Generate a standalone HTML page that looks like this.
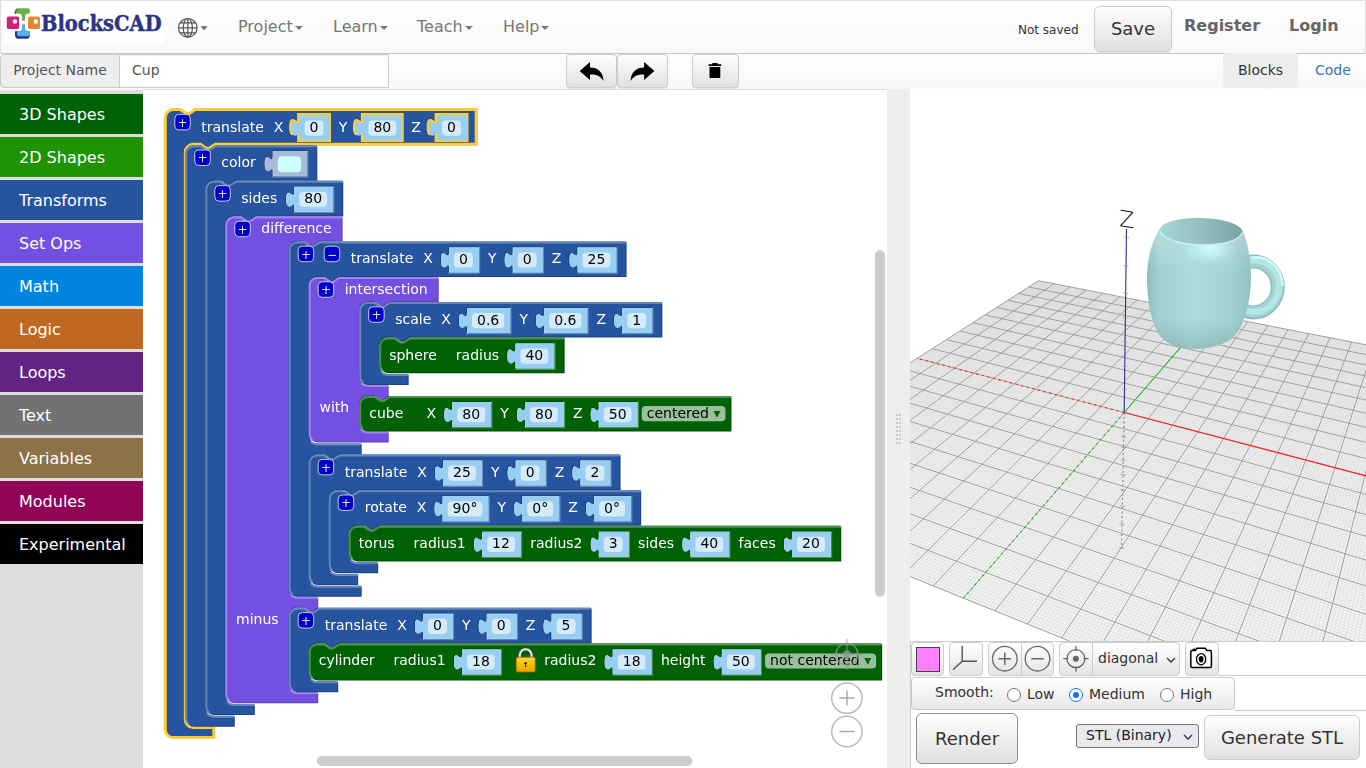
<!DOCTYPE html>
<html><head><meta charset="utf-8"><title>BlocksCAD</title>
<style>
html,body{margin:0;padding:0;}
body{width:1366px;height:768px;overflow:hidden;position:relative;background:#fff;font-family:"DejaVu Sans","Liberation Sans",sans-serif;font-size:14px;color:#333;}
*{box-sizing:border-box;}
#nav{position:absolute;left:0;top:0;width:1366px;height:54px;background:linear-gradient(#fff,#f8f8f8);border:1px solid #e0e0e0;border-bottom:1px solid #c8c8c8;box-shadow:0 1px 2px rgba(0,0,0,.22);}
#logo{position:absolute;left:4px;top:3px;width:158px;height:40px;background:#fff;}
.mi{position:absolute;top:16px;font-size:16px;color:#777;line-height:20px;white-space:nowrap;}
.caret{display:inline-block;width:0;height:0;border-top:4px solid #777;border-left:4px solid transparent;border-right:4px solid transparent;vertical-align:middle;margin-left:2px;}
#notsaved{position:absolute;left:1017px;top:21px;font-size:12px;color:#333;line-height:16px;}
#save{position:absolute;left:1093px;top:5px;width:78px;height:46px;border:1px solid #ccc;border-radius:6px;background:linear-gradient(#fff,#e0e0e0);font-size:18px;color:#333;text-align:center;line-height:44px;box-shadow:inset 0 1px 0 rgba(255,255,255,.15),0 1px 1px rgba(0,0,0,.075);}
.bl{position:absolute;top:15px;font-size:16px;font-weight:bold;color:#666;line-height:20px;}
#bar{position:absolute;left:0;top:54px;width:1366px;height:35px;background:linear-gradient(#fefefe,#f8f8f8);}
#pn{position:absolute;left:0;top:0px;width:120px;height:34px;border:1px solid #ccc;border-radius:4px 0 0 4px;background:#eee;color:#555;font-size:14px;line-height:30px;text-align:center;}
#pi{position:absolute;left:119px;top:0px;width:270px;height:34px;border:1px solid #ccc;background:#fff;color:#555;font-size:14px;line-height:30px;padding-left:12px;box-shadow:inset 0 1px 1px rgba(0,0,0,.075);}
.tb{position:absolute;top:0px;height:34px;border:1px solid #ccc;border-radius:4px;background:linear-gradient(#fff,#e0e0e0);box-shadow:0 1px 1px rgba(0,0,0,.075);}
#tabBlocks{position:absolute;left:1223px;top:-1px;width:75px;height:35px;background:#eee;border-radius:4px;color:#333;font-size:14px;line-height:34px;text-align:center;}
#tabCode{position:absolute;left:1315px;top:-1px;color:#337ab7;font-size:14px;line-height:34px;}
#toolbox{position:absolute;left:0;top:90px;width:143px;height:678px;background:#ddd;}
.cat{position:absolute;left:0;width:143px;height:40px;color:#fff;font-size:16px;line-height:42px;padding-left:19px;white-space:nowrap;}
#ws{position:absolute;left:143px;top:89px;width:744px;height:679px;background:#fff;overflow:hidden;box-shadow:inset 0 1px 0 #ddd;}
#resizer{position:absolute;left:887px;top:89px;width:23px;height:679px;background:#eee;}
#view{position:absolute;left:910px;top:89px;width:456px;height:552px;background:#fff;overflow:hidden;}
.bt{fill:#fff;font-size:14px;font-family:"DejaVu Sans",sans-serif;}
.et{fill:#000;font-size:14px;font-family:"DejaVu Sans",sans-serif;}
.er{fill:#fff;fill-opacity:.6;}
.is{fill:#00c;stroke:#ccc;stroke-width:1px;}
.im{fill:#e4e4e4;font-family:"DejaVu Sans",sans-serif;font-size:12px;text-anchor:middle;}

#resizer i{position:absolute;width:2px;height:2px;background:#c8c8c8;}
#vtools{position:absolute;left:910px;top:641px;width:456px;height:35px;background:#fff;border-top:1px solid #ccc;border-left:1px solid #ccc;}
.vb{position:absolute;top:0px;height:34px;border:1px solid #ccc;border-radius:4px;background:linear-gradient(#fff,#e4e4e4);overflow:hidden;}
#swatch{position:absolute;left:4px;top:4px;width:24px;height:25px;background:#ff80ff;border:1px solid #444;}
#smooth{position:absolute;left:911px;top:677px;width:324px;height:33px;border:1px solid #ccc;border-radius:4px;background:linear-gradient(#fff,#e8e8e8);font-size:14px;color:#333;}
.rd{position:absolute;top:10px;width:14px;height:14px;border:1.8px solid #767680;border-radius:50%;background:#fff;}
.rd.on{border-color:#1a6fe8;}
.rd.on:after{content:"";position:absolute;left:2.5px;top:2.5px;width:6px;height:6px;border-radius:50%;background:#1a6fe8;}
#hl1{position:absolute;left:1218px;top:675px;width:148px;height:1px;background:#ccc;}
#hl2{position:absolute;left:1234px;top:710px;width:132px;height:1px;background:#ccc;}
#vl1{position:absolute;left:910px;top:676px;width:1px;height:92px;background:#ccc;}
#render{position:absolute;left:916px;top:713px;width:102px;height:51px;border:1px solid #8c8c8c;border-radius:6px;background:linear-gradient(#fff,#e0e0e0);font-size:18px;color:#333;text-align:center;line-height:50px;}
#stl{position:absolute;left:1076px;top:724px;width:123px;height:24px;border:1px solid #767676;border-radius:3px;background:#e9e9ed;font-size:14px;color:#222;line-height:21px;padding-left:9px;}
#gen{position:absolute;left:1204px;top:715px;width:156px;height:45px;border:1px solid #ccc;border-radius:6px;background:linear-gradient(#fff,#e0e0e0);font-size:18px;color:#333;text-align:center;line-height:43px;}

</style></head>
<body>
<div id="nav">
<div id="logo"><svg width="158" height="40" viewBox="5 4 158 40">
<path d="M15.2 13.5 L15.2 11 Q15.2 8.3 18 8.3 L28 8.3 Q29.8 8.3 29.8 10.2 L29.8 12.5 Q29.8 13.8 28.3 13.8 L26.5 13.8 Q25 14.5 25 16.5 L25 20.8 L21.9 20.8 L21.9 16.5 Q21.9 14.3 20.3 13.8 Z" fill="#6ab04c"/>
<path d="M14.4 13.8 Q14.6 9.8 18 8.6 Q16 10 16 13.8 Z" fill="#2f6b2a"/>
<path d="M15 31.3 L30 31.3 L30 35 Q30 38.7 26.5 38.7 L18.5 38.7 Q15 38.7 15 35 Z" fill="#27378a"/>
<path d="M21.9 24.2 L25 24.2 L25 28 Q25 30.2 26.8 31 L28.6 31 Q30 31 30 32.4 L30 34 Q30 36.3 27.8 36.3 L19.5 36.3 Q17 36.3 17 33.8 L17 32.6 Q17 31.2 18.5 31 L20.3 31 Q21.9 30.3 21.9 28 Z" fill="#5baeeb"/>
<rect x="6.8" y="16.6" width="12.4" height="12.4" rx="1.8" fill="#d0207a"/>
<circle cx="15" cy="21.5" r="2.2" fill="#fff"/>
<rect x="28" y="16.6" width="12" height="12.4" rx="1.8" fill="#e08a2e"/>
<circle cx="35.8" cy="21.5" r="2.2" fill="#fff"/>
<text x="41" y="30.9" font-family="'DejaVu Serif Condensed','DejaVu Serif',serif" font-weight="bold" font-size="23.2" fill="#2a3585" stroke="#2a3585" stroke-width="0.45" textLength="120.5" lengthAdjust="spacingAndGlyphs">BlocksCAD</text>
</svg></div>
<svg id="globe" width="32" height="24" viewBox="176 16 32 24" style="position:absolute;left:175px;top:15px">
<g fill="none" stroke="#555" stroke-width="1.2"><circle cx="187.8" cy="27.8" r="9.3"/><ellipse cx="187.8" cy="27.8" rx="4.6" ry="9.3"/><path d="M187.8 18.5V37.1M178.5 27.8H197.1M180 22.8H195.6M180 32.8H195.6"/></g>
<path d="M200.6 26.2h7l-3.5 4z" fill="#666"/></svg>
<div class="mi" style="left:237px">Project<span class="caret"></span></div>
<div class="mi" style="left:332px">Learn<span class="caret"></span></div>
<div class="mi" style="left:416px">Teach<span class="caret"></span></div>
<div class="mi" style="left:502px">Help<span class="caret"></span></div>
<div id="notsaved">Not saved</div>
<div id="save">Save</div>
<div class="bl" style="left:1183px">Register</div>
<div class="bl" style="left:1288px">Login</div>
</div>
<div id="bar">
<div id="pn">Project Name</div><div id="pi">Cup</div>
<div class="tb" style="left:566px;width:51px"><svg width="49" height="32" viewBox="567 55 49 32"><path d="M579.7 71 L590 62 L590 67.5 C598 67.5 603 72 603.6 81 C600 75.5 596 74.3 590 74.5 L590 80 Z" fill="#000"/></svg></div>
<div class="tb" style="left:617px;width:51px"><svg width="49" height="32" viewBox="618 55 49 32"><path d="M654.4 71 L644.1 62 L644.1 67.5 C636.1 67.5 631.1 72 630.5 81 C634.1 75.5 638.1 74.3 644.1 74.5 L644.1 80 Z" fill="#000"/></svg></div>
<div class="tb" style="left:692px;width:47px"><svg width="45" height="32" viewBox="693 55 45 32"><path d="M708.6 64.3h12.6v1.8h-12.6zM712.3 62.9h5.2v1.6h-5.2zM709.5 66.9h10.8v10.2q0 1-1 1h-8.8q-1 0-1-1z" fill="#000"/></svg></div>
<div id="tabBlocks">Blocks</div><div id="tabCode">Code</div>
</div>
<div id="toolbox">
<div class="cat" style="top:4px;background:#006205">3D Shapes</div>
<div class="cat" style="top:47px;background:#209303">2D Shapes</div>
<div class="cat" style="top:90px;background:#26549E">Transforms</div>
<div class="cat" style="top:133px;background:#7450E2">Set Ops</div>
<div class="cat" style="top:176px;background:#0185E1">Math</div>
<div class="cat" style="top:219px;background:#BF6920">Logic</div>
<div class="cat" style="top:262px;background:#612485">Loops</div>
<div class="cat" style="top:305px;background:#727272">Text</div>
<div class="cat" style="top:348px;background:#8C7149">Variables</div>
<div class="cat" style="top:391px;background:#900355">Modules</div>
<div class="cat" style="top:434px;background:#000000">Experimental</div>
</div>
<div id="ws"><svg width="744" height="679" style="position:absolute;left:0;top:0;will-change:transform">
<defs><linearGradient id="lockg" x1="0" y1="0" x2="0" y2="1"><stop offset="0" stop-color="#ffd83a"/><stop offset="0.5" stop-color="#f8c000"/><stop offset="1" stop-color="#e7a400"/></linearGradient></defs>
<g transform="translate(22.3,20.6)">
<path d="m 0,8 A 8,8 0 0,1 8,0 H 15 l 6,4 3,0 6,-4 H 48.5 H 310.88 v 34.6 H 50 l -6,4 -3,0 -6,-4 h -7 a 8,8 0 0,0 -8,8 v 567.4 a 8,8 0 0,0 8,8 H 48.5 v 10 H 8 a 8,8 0 0,1 -8,-8 z M 164.23,5 h -30.92 v 5 c 0,10 -8,-8 -8,7.5 s 8,-2.5 8,7.5 v 6 h 30.92 z M 236.92,5 h -39.83 v 5 c 0,10 -8,-8 -8,7.5 s 8,-2.5 8,7.5 v 6 h 39.83 z M 301.73,5 h -30.92 v 5 c 0,10 -8,-8 -8,7.5 s 8,-2.5 8,7.5 v 6 h 30.92 z" fill="#1e437e" transform="translate(1,1)"/>
<path d="m 0,8 A 8,8 0 0,1 8,0 H 15 l 6,4 3,0 6,-4 H 48.5 H 310.88 v 34.6 H 50 l -6,4 -3,0 -6,-4 h -7 a 8,8 0 0,0 -8,8 v 567.4 a 8,8 0 0,0 8,8 H 48.5 v 10 H 8 a 8,8 0 0,1 -8,-8 z M 164.23,5 h -30.92 v 5 c 0,10 -8,-8 -8,7.5 s 8,-2.5 8,7.5 v 6 h 30.92 z M 236.92,5 h -39.83 v 5 c 0,10 -8,-8 -8,7.5 s 8,-2.5 8,7.5 v 6 h 39.83 z M 301.73,5 h -30.92 v 5 c 0,10 -8,-8 -8,7.5 s 8,-2.5 8,7.5 v 6 h 30.92 z" fill="#26549E" stroke="#fc3" stroke-width="3"/>
<g transform="translate(10,5)"><rect class="is" x="-0.5" y="-0.2" width="15.5" height="15.5" rx="4" ry="4"/><text class="im" x="7.3" y="12.2">+</text></g>
<text class="bt" x="36" y="22">translate</text>
<text class="bt" x="108.56" y="22">X</text>
<text class="bt" x="173.38" y="22">Y</text>
<text class="bt" x="246.07" y="22">Z</text>
<g transform="translate(134.31,6)">
<path d="m 0,0 H 20 H 28.92 v 24 H 0 V 20 c 0,-10 -8,8 -8,-7.5 s 8,2.5 8,-7.5 z " fill="#99cef3" transform="translate(1,1)"/>
<path d="m 0,0 H 20 H 28.92 v 24 H 0 V 20 c 0,-10 -8,8 -8,-7.5 s 8,2.5 8,-7.5 z " fill="#99cef3"/>
<g transform="translate(10,17)"><rect class="er" x="-5" y="-12" width="18.92" height="15.2" rx="4" ry="4"/><text class="et" y="-0.4">0</text></g>
</g>
<g transform="translate(198.09,6)">
<path d="m 0,0 H 20 H 37.83 v 24 H 0 V 20 c 0,-10 -8,8 -8,-7.5 s 8,2.5 8,-7.5 z " fill="#99cef3" transform="translate(1,1)"/>
<path d="m 0,0 H 20 H 37.83 v 24 H 0 V 20 c 0,-10 -8,8 -8,-7.5 s 8,2.5 8,-7.5 z " fill="#99cef3"/>
<g transform="translate(10,17)"><rect class="er" x="-5" y="-12" width="27.83" height="15.2" rx="4" ry="4"/><text class="et" y="-0.4">80</text></g>
</g>
<g transform="translate(271.81,6)">
<path d="m 0,0 H 20 H 28.92 v 24 H 0 V 20 c 0,-10 -8,8 -8,-7.5 s 8,2.5 8,-7.5 z " fill="#99cef3" transform="translate(1,1)"/>
<path d="m 0,0 H 20 H 28.92 v 24 H 0 V 20 c 0,-10 -8,8 -8,-7.5 s 8,2.5 8,-7.5 z " fill="#99cef3"/>
<g transform="translate(10,17)"><rect class="er" x="-5" y="-12" width="18.92" height="15.2" rx="4" ry="4"/><text class="et" y="-0.4">0</text></g>
</g>
<g transform="translate(20,35.6)">
<path d="m 0,8 A 8,8 0 0,1 8,0 H 15 l 6,4 3,0 6,-4 H 48.5 H 130.99 v 34.6 H 50 l -6,4 -3,0 -6,-4 h -7 a 8,8 0 0,0 -8,8 v 520 a 8,8 0 0,0 8,8 H 48.5 v 10 H 8 a 8,8 0 0,1 -8,-8 z M 121.84,5 h -35.36 v 5 c 0,10 -8,-8 -8,7.5 s 8,-2.5 8,7.5 v 6 h 35.36 z" fill="#1e437e" transform="translate(1,1)"/>
<path d="m 0,8 A 8,8 0 0,1 8,0 H 15 l 6,4 3,0 6,-4 H 48.5 H 130.99 v 34.6 H 50 l -6,4 -3,0 -6,-4 h -7 a 8,8 0 0,0 -8,8 v 520 a 8,8 0 0,0 8,8 H 48.5 v 10 H 8 a 8,8 0 0,1 -8,-8 z M 121.84,5 h -35.36 v 5 c 0,10 -8,-8 -8,7.5 s 8,-2.5 8,7.5 v 6 h 35.36 z" fill="#26549E"/>
<path d="m 0.5,7.5 A 7.5,7.5 0 0,1 8,0.5 H 15 l 6,4 3,0 6,-4 H 48 M 48,0.5 H 130.49 M 48,35.1 M 21.99,568.61 a 8.5,8.5 0 0,0 6.01,2.49 H 48 M 2.7,577.9 A 7.5,7.5 0 0,1 0.5,572.6 V 8" fill="none" stroke="#6787bb" stroke-width="2" stroke-linecap="round" transform="translate(0.5,0.5)"/>
<path d="M 122.34,5.5 v 26 h -35.36 M 81.38,24.3 l 3.68,-2.1" fill="none" stroke="#6787bb" stroke-width="1.2" stroke-linecap="round" transform="translate(0.2,0.2)"/>
<g transform="translate(10,5)"><rect class="is" x="-0.5" y="-0.2" width="15.5" height="15.5" rx="4" ry="4"/><text class="im" x="7.3" y="12.2">+</text></g>
<text class="bt" x="36" y="22">color</text>
<g transform="translate(87.48,6)">
<path d="m 0,0 H 20 H 33.36 v 24 H 0 V 20 c 0,-10 -8,8 -8,-7.5 s 8,2.5 8,-7.5 z " fill="#a8bbd8" transform="translate(1,1)"/>
<path d="m 0,0 H 20 H 33.36 v 24 H 0 V 20 c 0,-10 -8,8 -8,-7.5 s 8,2.5 8,-7.5 z " fill="#a8bbd8"/>
<rect x="5" y="5" width="23.36" height="16" rx="4" ry="4" fill="#ccffff"/>
</g>
<g transform="translate(20,35.6)">
<path d="m 0,8 A 8,8 0 0,1 8,0 H 15 l 6,4 3,0 6,-4 H 48.5 H 136.96 v 34.6 H 50 l -6,4 -3,0 -6,-4 h -7 a 8,8 0 0,0 -8,8 v 472.6 a 8,8 0 0,0 8,8 H 48.5 v 10 H 8 a 8,8 0 0,1 -8,-8 z M 127.81,5 h -39.83 v 5 c 0,10 -8,-8 -8,7.5 s 8,-2.5 8,7.5 v 6 h 39.83 z" fill="#1e437e" transform="translate(1,1)"/>
<path d="m 0,8 A 8,8 0 0,1 8,0 H 15 l 6,4 3,0 6,-4 H 48.5 H 136.96 v 34.6 H 50 l -6,4 -3,0 -6,-4 h -7 a 8,8 0 0,0 -8,8 v 472.6 a 8,8 0 0,0 8,8 H 48.5 v 10 H 8 a 8,8 0 0,1 -8,-8 z M 127.81,5 h -39.83 v 5 c 0,10 -8,-8 -8,7.5 s 8,-2.5 8,7.5 v 6 h 39.83 z" fill="#26549E"/>
<path d="m 0.5,7.5 A 7.5,7.5 0 0,1 8,0.5 H 15 l 6,4 3,0 6,-4 H 48 M 48,0.5 H 136.46 M 48,35.1 M 21.99,521.21 a 8.5,8.5 0 0,0 6.01,2.49 H 48 M 2.7,530.5 A 7.5,7.5 0 0,1 0.5,525.2 V 8" fill="none" stroke="#6787bb" stroke-width="2" stroke-linecap="round" transform="translate(0.5,0.5)"/>
<path d="M 128.31,5.5 v 26 h -39.83 M 82.88,24.3 l 3.68,-2.1" fill="none" stroke="#6787bb" stroke-width="1.2" stroke-linecap="round" transform="translate(0.2,0.2)"/>
<g transform="translate(10,5)"><rect class="is" x="-0.5" y="-0.2" width="15.5" height="15.5" rx="4" ry="4"/><text class="im" x="7.3" y="12.2">+</text></g>
<text class="bt" x="36" y="22">sides</text>
<g transform="translate(88.98,6)">
<path d="m 0,0 H 20 H 37.83 v 24 H 0 V 20 c 0,-10 -8,8 -8,-7.5 s 8,2.5 8,-7.5 z " fill="#99cef3" transform="translate(1,1)"/>
<path d="m 0,0 H 20 H 37.83 v 24 H 0 V 20 c 0,-10 -8,8 -8,-7.5 s 8,2.5 8,-7.5 z " fill="#99cef3"/>
<g transform="translate(10,17)"><rect class="er" x="-5" y="-12" width="27.83" height="15.2" rx="4" ry="4"/><text class="et" y="-0.4">80</text></g>
</g>
<g transform="translate(20,35.6)">
<path d="m 0,8 A 8,8 0 0,1 8,0 H 15 l 6,4 3,0 6,-4 H 91.88 H 116.28 v 24 H 93.38 l -6,4 -3,0 -6,-4 h -7 a 8,8 0 0,0 -8,8 v 340.4 a 8,8 0 0,0 8,8 H 91.88 v 10 H 93.38 l -6,4 -3,0 -6,-4 h -7 a 8,8 0 0,0 -8,8 v 69.4 a 8,8 0 0,0 8,8 H 91.88 v 10 H 8 a 8,8 0 0,1 -8,-8 z " fill="#5d40b5" transform="translate(1,1)"/>
<path d="m 0,8 A 8,8 0 0,1 8,0 H 15 l 6,4 3,0 6,-4 H 91.88 H 116.28 v 24 H 93.38 l -6,4 -3,0 -6,-4 h -7 a 8,8 0 0,0 -8,8 v 340.4 a 8,8 0 0,0 8,8 H 91.88 v 10 H 93.38 l -6,4 -3,0 -6,-4 h -7 a 8,8 0 0,0 -8,8 v 69.4 a 8,8 0 0,0 8,8 H 91.88 v 10 H 8 a 8,8 0 0,1 -8,-8 z " fill="#7450E2"/>
<path d="m 0.5,7.5 A 7.5,7.5 0 0,1 8,0.5 H 15 l 6,4 3,0 6,-4 H 91.38 M 91.38,0.5 H 115.78 M 91.38,24.5 M 65.37,378.41 a 8.5,8.5 0 0,0 6.01,2.49 H 91.38 M 91.38,390.9 M 65.37,473.81 a 8.5,8.5 0 0,0 6.01,2.49 H 91.38 M 2.7,483.1 A 7.5,7.5 0 0,1 0.5,477.8 V 8" fill="none" stroke="#9e84eb" stroke-width="2" stroke-linecap="round" transform="translate(0.5,0.5)"/>
<g transform="translate(10,5)"><rect class="is" x="-0.5" y="-0.2" width="15.5" height="15.5" rx="4" ry="4"/><text class="im" x="7.3" y="12.2">+</text></g>
<text class="bt" x="36" y="17">difference</text>
<text class="bt" x="10.8" y="407.4">minus</text>
<g transform="translate(63.38,25)">
<path d="m 0,8 A 8,8 0 0,1 8,0 H 15 l 6,4 3,0 6,-4 H 72 H 336.88 v 34.6 H 50 l -6,4 -3,0 -6,-4 h -7 a 8,8 0 0,0 -8,8 v 151.6 a 8,8 0 0,0 8,8 H 72 v 10 H 50 l -6,4 -3,0 -6,-4 h -7 a 8,8 0 0,0 -8,8 v 116.2 a 8,8 0 0,0 8,8 H 72 v 10 H 8 a 8,8 0 0,1 -8,-8 z M 190.23,5 h -30.92 v 5 c 0,10 -8,-8 -8,7.5 s 8,-2.5 8,7.5 v 6 h 30.92 z M 254.01,5 h -30.92 v 5 c 0,10 -8,-8 -8,7.5 s 8,-2.5 8,7.5 v 6 h 30.92 z M 327.73,5 h -39.83 v 5 c 0,10 -8,-8 -8,7.5 s 8,-2.5 8,7.5 v 6 h 39.83 z" fill="#1e437e" transform="translate(1,1)"/>
<path d="m 0,8 A 8,8 0 0,1 8,0 H 15 l 6,4 3,0 6,-4 H 72 H 336.88 v 34.6 H 50 l -6,4 -3,0 -6,-4 h -7 a 8,8 0 0,0 -8,8 v 151.6 a 8,8 0 0,0 8,8 H 72 v 10 H 50 l -6,4 -3,0 -6,-4 h -7 a 8,8 0 0,0 -8,8 v 116.2 a 8,8 0 0,0 8,8 H 72 v 10 H 8 a 8,8 0 0,1 -8,-8 z M 190.23,5 h -30.92 v 5 c 0,10 -8,-8 -8,7.5 s 8,-2.5 8,7.5 v 6 h 30.92 z M 254.01,5 h -30.92 v 5 c 0,10 -8,-8 -8,7.5 s 8,-2.5 8,7.5 v 6 h 30.92 z M 327.73,5 h -39.83 v 5 c 0,10 -8,-8 -8,7.5 s 8,-2.5 8,7.5 v 6 h 39.83 z" fill="#26549E"/>
<path d="m 0.5,7.5 A 7.5,7.5 0 0,1 8,0.5 H 15 l 6,4 3,0 6,-4 H 71.5 M 71.5,0.5 H 336.38 M 71.5,35.1 M 21.99,200.21 a 8.5,8.5 0 0,0 6.01,2.49 H 71.5 M 71.5,212.7 M 21.99,342.41 a 8.5,8.5 0 0,0 6.01,2.49 H 71.5 M 2.7,351.7 A 7.5,7.5 0 0,1 0.5,346.4 V 8" fill="none" stroke="#6787bb" stroke-width="2" stroke-linecap="round" transform="translate(0.5,0.5)"/>
<path d="M 190.73,5.5 v 26 h -30.92 M 154.21,24.3 l 3.68,-2.1 M 254.51,5.5 v 26 h -30.92 M 217.99,24.3 l 3.68,-2.1 M 328.23,5.5 v 26 h -39.83 M 282.81,24.3 l 3.68,-2.1" fill="none" stroke="#6787bb" stroke-width="1.2" stroke-linecap="round" transform="translate(0.2,0.2)"/>
<g transform="translate(10,5)"><rect class="is" x="-0.5" y="-0.2" width="15.5" height="15.5" rx="4" ry="4"/><text class="im" x="7.3" y="12.2">+</text></g>
<g transform="translate(36,5)"><rect class="is" x="-0.5" y="-0.2" width="15.5" height="15.5" rx="4" ry="4"/><text class="im" x="7.3" y="12.2">−</text></g>
<text class="bt" x="62" y="22">translate</text>
<text class="bt" x="134.56" y="22">X</text>
<text class="bt" x="199.38" y="22">Y</text>
<text class="bt" x="263.16" y="22">Z</text>
<g transform="translate(160.31,6)">
<path d="m 0,0 H 20 H 28.92 v 24 H 0 V 20 c 0,-10 -8,8 -8,-7.5 s 8,2.5 8,-7.5 z " fill="#99cef3" transform="translate(1,1)"/>
<path d="m 0,0 H 20 H 28.92 v 24 H 0 V 20 c 0,-10 -8,8 -8,-7.5 s 8,2.5 8,-7.5 z " fill="#99cef3"/>
<g transform="translate(10,17)"><rect class="er" x="-5" y="-12" width="18.92" height="15.2" rx="4" ry="4"/><text class="et" y="-0.4">0</text></g>
</g>
<g transform="translate(224.09,6)">
<path d="m 0,0 H 20 H 28.92 v 24 H 0 V 20 c 0,-10 -8,8 -8,-7.5 s 8,2.5 8,-7.5 z " fill="#99cef3" transform="translate(1,1)"/>
<path d="m 0,0 H 20 H 28.92 v 24 H 0 V 20 c 0,-10 -8,8 -8,-7.5 s 8,2.5 8,-7.5 z " fill="#99cef3"/>
<g transform="translate(10,17)"><rect class="er" x="-5" y="-12" width="18.92" height="15.2" rx="4" ry="4"/><text class="et" y="-0.4">0</text></g>
</g>
<g transform="translate(288.91,6)">
<path d="m 0,0 H 20 H 37.83 v 24 H 0 V 20 c 0,-10 -8,8 -8,-7.5 s 8,2.5 8,-7.5 z " fill="#99cef3" transform="translate(1,1)"/>
<path d="m 0,0 H 20 H 37.83 v 24 H 0 V 20 c 0,-10 -8,8 -8,-7.5 s 8,2.5 8,-7.5 z " fill="#99cef3"/>
<g transform="translate(10,17)"><rect class="er" x="-5" y="-12" width="27.83" height="15.2" rx="4" ry="4"/><text class="et" y="-0.4">25</text></g>
</g>
<g transform="translate(20,35.6)">
<path d="m 0,8 A 8,8 0 0,1 8,0 H 15 l 6,4 3,0 6,-4 H 79 H 129.05 v 24 H 80.5 l -6,4 -3,0 -6,-4 h -7 a 8,8 0 0,0 -8,8 v 68 a 8,8 0 0,0 8,8 H 79 v 10 H 80.5 l -6,4 -3,0 -6,-4 h -7 a 8,8 0 0,0 -8,8 v 20.6 a 8,8 0 0,0 8,8 H 79 v 10 H 8 a 8,8 0 0,1 -8,-8 z " fill="#5d40b5" transform="translate(1,1)"/>
<path d="m 0,8 A 8,8 0 0,1 8,0 H 15 l 6,4 3,0 6,-4 H 79 H 129.05 v 24 H 80.5 l -6,4 -3,0 -6,-4 h -7 a 8,8 0 0,0 -8,8 v 68 a 8,8 0 0,0 8,8 H 79 v 10 H 80.5 l -6,4 -3,0 -6,-4 h -7 a 8,8 0 0,0 -8,8 v 20.6 a 8,8 0 0,0 8,8 H 79 v 10 H 8 a 8,8 0 0,1 -8,-8 z " fill="#7450E2"/>
<path d="m 0.5,7.5 A 7.5,7.5 0 0,1 8,0.5 H 15 l 6,4 3,0 6,-4 H 78.5 M 78.5,0.5 H 128.55 M 78.5,24.5 M 52.49,106.01 a 8.5,8.5 0 0,0 6.01,2.49 H 78.5 M 78.5,118.5 M 52.49,152.61 a 8.5,8.5 0 0,0 6.01,2.49 H 78.5 M 2.7,161.9 A 7.5,7.5 0 0,1 0.5,156.6 V 8" fill="none" stroke="#9e84eb" stroke-width="2" stroke-linecap="round" transform="translate(0.5,0.5)"/>
<g transform="translate(10,5)"><rect class="is" x="-0.5" y="-0.2" width="15.5" height="15.5" rx="4" ry="4"/><text class="im" x="7.3" y="12.2">+</text></g>
<text class="bt" x="36" y="17">intersection</text>
<text class="bt" x="10.8" y="135">with</text>
<g transform="translate(50.5,25)">
<path d="m 0,8 A 8,8 0 0,1 8,0 H 15 l 6,4 3,0 6,-4 H 48.5 H 302.18 v 34.6 H 50 l -6,4 -3,0 -6,-4 h -7 a 8,8 0 0,0 -8,8 v 21.4 a 8,8 0 0,0 8,8 H 48.5 v 10 H 8 a 8,8 0 0,1 -8,-8 z M 151.09,5 h -44.27 v 5 c 0,10 -8,-8 -8,7.5 s 8,-2.5 8,7.5 v 6 h 44.27 z M 228.22,5 h -44.27 v 5 c 0,10 -8,-8 -8,7.5 s 8,-2.5 8,7.5 v 6 h 44.27 z M 293.03,5 h -30.92 v 5 c 0,10 -8,-8 -8,7.5 s 8,-2.5 8,7.5 v 6 h 30.92 z" fill="#1e437e" transform="translate(1,1)"/>
<path d="m 0,8 A 8,8 0 0,1 8,0 H 15 l 6,4 3,0 6,-4 H 48.5 H 302.18 v 34.6 H 50 l -6,4 -3,0 -6,-4 h -7 a 8,8 0 0,0 -8,8 v 21.4 a 8,8 0 0,0 8,8 H 48.5 v 10 H 8 a 8,8 0 0,1 -8,-8 z M 151.09,5 h -44.27 v 5 c 0,10 -8,-8 -8,7.5 s 8,-2.5 8,7.5 v 6 h 44.27 z M 228.22,5 h -44.27 v 5 c 0,10 -8,-8 -8,7.5 s 8,-2.5 8,7.5 v 6 h 44.27 z M 293.03,5 h -30.92 v 5 c 0,10 -8,-8 -8,7.5 s 8,-2.5 8,7.5 v 6 h 30.92 z" fill="#26549E"/>
<path d="m 0.5,7.5 A 7.5,7.5 0 0,1 8,0.5 H 15 l 6,4 3,0 6,-4 H 48 M 48,0.5 H 301.68 M 48,35.1 M 21.99,70.01 a 8.5,8.5 0 0,0 6.01,2.49 H 48 M 2.7,79.3 A 7.5,7.5 0 0,1 0.5,74 V 8" fill="none" stroke="#6787bb" stroke-width="2" stroke-linecap="round" transform="translate(0.5,0.5)"/>
<path d="M 151.59,5.5 v 26 h -44.27 M 101.72,24.3 l 3.68,-2.1 M 228.72,5.5 v 26 h -44.27 M 178.85,24.3 l 3.68,-2.1 M 293.53,5.5 v 26 h -30.92 M 257.01,24.3 l 3.68,-2.1" fill="none" stroke="#6787bb" stroke-width="1.2" stroke-linecap="round" transform="translate(0.2,0.2)"/>
<g transform="translate(10,5)"><rect class="is" x="-0.5" y="-0.2" width="15.5" height="15.5" rx="4" ry="4"/><text class="im" x="7.3" y="12.2">+</text></g>
<text class="bt" x="36" y="22">scale</text>
<text class="bt" x="82.08" y="22">X</text>
<text class="bt" x="160.24" y="22">Y</text>
<text class="bt" x="237.37" y="22">Z</text>
<g transform="translate(107.82,6)">
<path d="m 0,0 H 20 H 42.27 v 24 H 0 V 20 c 0,-10 -8,8 -8,-7.5 s 8,2.5 8,-7.5 z " fill="#99cef3" transform="translate(1,1)"/>
<path d="m 0,0 H 20 H 42.27 v 24 H 0 V 20 c 0,-10 -8,8 -8,-7.5 s 8,2.5 8,-7.5 z " fill="#99cef3"/>
<g transform="translate(10,17)"><rect class="er" x="-5" y="-12" width="32.27" height="15.2" rx="4" ry="4"/><text class="et" y="-0.4">0.6</text></g>
</g>
<g transform="translate(184.95,6)">
<path d="m 0,0 H 20 H 42.27 v 24 H 0 V 20 c 0,-10 -8,8 -8,-7.5 s 8,2.5 8,-7.5 z " fill="#99cef3" transform="translate(1,1)"/>
<path d="m 0,0 H 20 H 42.27 v 24 H 0 V 20 c 0,-10 -8,8 -8,-7.5 s 8,2.5 8,-7.5 z " fill="#99cef3"/>
<g transform="translate(10,17)"><rect class="er" x="-5" y="-12" width="32.27" height="15.2" rx="4" ry="4"/><text class="et" y="-0.4">0.6</text></g>
</g>
<g transform="translate(263.11,6)">
<path d="m 0,0 H 20 H 28.92 v 24 H 0 V 20 c 0,-10 -8,8 -8,-7.5 s 8,2.5 8,-7.5 z " fill="#99cef3" transform="translate(1,1)"/>
<path d="m 0,0 H 20 H 28.92 v 24 H 0 V 20 c 0,-10 -8,8 -8,-7.5 s 8,2.5 8,-7.5 z " fill="#99cef3"/>
<g transform="translate(10,17)"><rect class="er" x="-5" y="-12" width="18.92" height="15.2" rx="4" ry="4"/><text class="et" y="-0.4">1</text></g>
</g>
<g transform="translate(20,35.6)">
<path d="m 0,8 A 8,8 0 0,1 8,0 H 15 l 6,4 3,0 6,-4 H 40 H 184.45 v 34.6 H 8 a 8,8 0 0,1 -8,-8 z M 175.1,5 h -39.83 v 5 c 0,10 -8,-8 -8,7.5 s 8,-2.5 8,7.5 v 6 h 39.83 z" fill="#004e04" transform="translate(1,1)"/>
<path d="m 0,8 A 8,8 0 0,1 8,0 H 15 l 6,4 3,0 6,-4 H 40 H 184.45 v 34.6 H 8 a 8,8 0 0,1 -8,-8 z M 175.1,5 h -39.83 v 5 c 0,10 -8,-8 -8,7.5 s 8,-2.5 8,7.5 v 6 h 39.83 z" fill="#006205"/>
<path d="m 0.5,7.5 A 7.5,7.5 0 0,1 8,0.5 H 15 l 6,4 3,0 6,-4 H 39.5 M 39.5,0.5 H 183.95 M 2.7,31.9 A 7.5,7.5 0 0,1 0.5,26.6 V 8" fill="none" stroke="#4c9150" stroke-width="2" stroke-linecap="round" transform="translate(0.5,0.5)"/>
<path d="M 175.6,5.5 v 26 h -39.83 M 130.17,24.3 l 3.68,-2.1" fill="none" stroke="#4c9150" stroke-width="1.2" stroke-linecap="round" transform="translate(0.2,0.2)"/>
<text class="bt" x="10" y="22">sphere  </text>
<text class="bt" x="76.64" y="22">radius</text>
<g transform="translate(136.27,6)">
<path d="m 0,0 H 20 H 37.83 v 24 H 0 V 20 c 0,-10 -8,8 -8,-7.5 s 8,2.5 8,-7.5 z " fill="#99cef3" transform="translate(1,1)"/>
<path d="m 0,0 H 20 H 37.83 v 24 H 0 V 20 c 0,-10 -8,8 -8,-7.5 s 8,2.5 8,-7.5 z " fill="#99cef3"/>
<g transform="translate(10,17)"><rect class="er" x="-5" y="-12" width="27.83" height="15.2" rx="4" ry="4"/><text class="et" y="-0.4">40</text></g>
</g>
</g>
</g>
<g transform="translate(50.5,119)">
<path d="m 0,8 A 8,8 0 0,1 8,0 H 15 l 6,4 3,0 6,-4 H 40 H 371.27 v 34.6 H 8 a 8,8 0 0,1 -8,-8 z M 131.99,5 h -39.83 v 5 c 0,10 -8,-8 -8,7.5 s 8,-2.5 8,7.5 v 6 h 39.83 z M 204.68,5 h -39.83 v 5 c 0,10 -8,-8 -8,7.5 s 8,-2.5 8,7.5 v 6 h 39.83 z M 278.41,5 h -39.83 v 5 c 0,10 -8,-8 -8,7.5 s 8,-2.5 8,7.5 v 6 h 39.83 z" fill="#004e04" transform="translate(1,1)"/>
<path d="m 0,8 A 8,8 0 0,1 8,0 H 15 l 6,4 3,0 6,-4 H 40 H 371.27 v 34.6 H 8 a 8,8 0 0,1 -8,-8 z M 131.99,5 h -39.83 v 5 c 0,10 -8,-8 -8,7.5 s 8,-2.5 8,7.5 v 6 h 39.83 z M 204.68,5 h -39.83 v 5 c 0,10 -8,-8 -8,7.5 s 8,-2.5 8,7.5 v 6 h 39.83 z M 278.41,5 h -39.83 v 5 c 0,10 -8,-8 -8,7.5 s 8,-2.5 8,7.5 v 6 h 39.83 z" fill="#006205"/>
<path d="m 0.5,7.5 A 7.5,7.5 0 0,1 8,0.5 H 15 l 6,4 3,0 6,-4 H 39.5 M 39.5,0.5 H 370.77 M 2.7,31.9 A 7.5,7.5 0 0,1 0.5,26.6 V 8" fill="none" stroke="#4c9150" stroke-width="2" stroke-linecap="round" transform="translate(0.5,0.5)"/>
<path d="M 132.49,5.5 v 26 h -39.83 M 87.07,24.3 l 3.68,-2.1 M 205.18,5.5 v 26 h -39.83 M 159.76,24.3 l 3.68,-2.1 M 278.91,5.5 v 26 h -39.83 M 233.48,24.3 l 3.68,-2.1" fill="none" stroke="#4c9150" stroke-width="1.2" stroke-linecap="round" transform="translate(0.2,0.2)"/>
<text class="bt" x="10" y="22">cube   </text>
<text class="bt" x="67.42" y="22">X</text>
<text class="bt" x="141.14" y="22">Y</text>
<text class="bt" x="213.83" y="22">Z</text>
<g transform="translate(287.56,22)"><rect class="er" x="-5" y="-12" width="83.72" height="15.2" rx="4" ry="4"/><text class="et" y="-0.4">centered<tspan fill="#006205"> ▾</tspan></text></g>
<g transform="translate(93.17,6)">
<path d="m 0,0 H 20 H 37.83 v 24 H 0 V 20 c 0,-10 -8,8 -8,-7.5 s 8,2.5 8,-7.5 z " fill="#99cef3" transform="translate(1,1)"/>
<path d="m 0,0 H 20 H 37.83 v 24 H 0 V 20 c 0,-10 -8,8 -8,-7.5 s 8,2.5 8,-7.5 z " fill="#99cef3"/>
<g transform="translate(10,17)"><rect class="er" x="-5" y="-12" width="27.83" height="15.2" rx="4" ry="4"/><text class="et" y="-0.4">80</text></g>
</g>
<g transform="translate(165.86,6)">
<path d="m 0,0 H 20 H 37.83 v 24 H 0 V 20 c 0,-10 -8,8 -8,-7.5 s 8,2.5 8,-7.5 z " fill="#99cef3" transform="translate(1,1)"/>
<path d="m 0,0 H 20 H 37.83 v 24 H 0 V 20 c 0,-10 -8,8 -8,-7.5 s 8,2.5 8,-7.5 z " fill="#99cef3"/>
<g transform="translate(10,17)"><rect class="er" x="-5" y="-12" width="27.83" height="15.2" rx="4" ry="4"/><text class="et" y="-0.4">80</text></g>
</g>
<g transform="translate(239.58,6)">
<path d="m 0,0 H 20 H 37.83 v 24 H 0 V 20 c 0,-10 -8,8 -8,-7.5 s 8,2.5 8,-7.5 z " fill="#99cef3" transform="translate(1,1)"/>
<path d="m 0,0 H 20 H 37.83 v 24 H 0 V 20 c 0,-10 -8,8 -8,-7.5 s 8,2.5 8,-7.5 z " fill="#99cef3"/>
<g transform="translate(10,17)"><rect class="er" x="-5" y="-12" width="27.83" height="15.2" rx="4" ry="4"/><text class="et" y="-0.4">50</text></g>
</g>
</g>
</g>
<g transform="translate(20,213.2)">
<path d="m 0,8 A 8,8 0 0,1 8,0 H 15 l 6,4 3,0 6,-4 H 48.5 H 310.88 v 34.6 H 50 l -6,4 -3,0 -6,-4 h -7 a 8,8 0 0,0 -8,8 v 68.8 a 8,8 0 0,0 8,8 H 48.5 v 10 H 8 a 8,8 0 0,1 -8,-8 z M 173.13,5 h -39.83 v 5 c 0,10 -8,-8 -8,7.5 s 8,-2.5 8,7.5 v 6 h 39.83 z M 236.92,5 h -30.92 v 5 c 0,10 -8,-8 -8,7.5 s 8,-2.5 8,7.5 v 6 h 30.92 z M 301.73,5 h -30.92 v 5 c 0,10 -8,-8 -8,7.5 s 8,-2.5 8,7.5 v 6 h 30.92 z" fill="#1e437e" transform="translate(1,1)"/>
<path d="m 0,8 A 8,8 0 0,1 8,0 H 15 l 6,4 3,0 6,-4 H 48.5 H 310.88 v 34.6 H 50 l -6,4 -3,0 -6,-4 h -7 a 8,8 0 0,0 -8,8 v 68.8 a 8,8 0 0,0 8,8 H 48.5 v 10 H 8 a 8,8 0 0,1 -8,-8 z M 173.13,5 h -39.83 v 5 c 0,10 -8,-8 -8,7.5 s 8,-2.5 8,7.5 v 6 h 39.83 z M 236.92,5 h -30.92 v 5 c 0,10 -8,-8 -8,7.5 s 8,-2.5 8,7.5 v 6 h 30.92 z M 301.73,5 h -30.92 v 5 c 0,10 -8,-8 -8,7.5 s 8,-2.5 8,7.5 v 6 h 30.92 z" fill="#26549E"/>
<path d="m 0.5,7.5 A 7.5,7.5 0 0,1 8,0.5 H 15 l 6,4 3,0 6,-4 H 48 M 48,0.5 H 310.38 M 48,35.1 M 21.99,117.41 a 8.5,8.5 0 0,0 6.01,2.49 H 48 M 2.7,126.7 A 7.5,7.5 0 0,1 0.5,121.4 V 8" fill="none" stroke="#6787bb" stroke-width="2" stroke-linecap="round" transform="translate(0.5,0.5)"/>
<path d="M 173.63,5.5 v 26 h -39.83 M 128.21,24.3 l 3.68,-2.1 M 237.42,5.5 v 26 h -30.92 M 200.9,24.3 l 3.68,-2.1 M 302.23,5.5 v 26 h -30.92 M 265.71,24.3 l 3.68,-2.1" fill="none" stroke="#6787bb" stroke-width="1.2" stroke-linecap="round" transform="translate(0.2,0.2)"/>
<g transform="translate(10,5)"><rect class="is" x="-0.5" y="-0.2" width="15.5" height="15.5" rx="4" ry="4"/><text class="im" x="7.3" y="12.2">+</text></g>
<text class="bt" x="36" y="22">translate</text>
<text class="bt" x="108.56" y="22">X</text>
<text class="bt" x="182.28" y="22">Y</text>
<text class="bt" x="246.07" y="22">Z</text>
<g transform="translate(134.31,6)">
<path d="m 0,0 H 20 H 37.83 v 24 H 0 V 20 c 0,-10 -8,8 -8,-7.5 s 8,2.5 8,-7.5 z " fill="#99cef3" transform="translate(1,1)"/>
<path d="m 0,0 H 20 H 37.83 v 24 H 0 V 20 c 0,-10 -8,8 -8,-7.5 s 8,2.5 8,-7.5 z " fill="#99cef3"/>
<g transform="translate(10,17)"><rect class="er" x="-5" y="-12" width="27.83" height="15.2" rx="4" ry="4"/><text class="et" y="-0.4">25</text></g>
</g>
<g transform="translate(207,6)">
<path d="m 0,0 H 20 H 28.92 v 24 H 0 V 20 c 0,-10 -8,8 -8,-7.5 s 8,2.5 8,-7.5 z " fill="#99cef3" transform="translate(1,1)"/>
<path d="m 0,0 H 20 H 28.92 v 24 H 0 V 20 c 0,-10 -8,8 -8,-7.5 s 8,2.5 8,-7.5 z " fill="#99cef3"/>
<g transform="translate(10,17)"><rect class="er" x="-5" y="-12" width="18.92" height="15.2" rx="4" ry="4"/><text class="et" y="-0.4">0</text></g>
</g>
<g transform="translate(271.81,6)">
<path d="m 0,0 H 20 H 28.92 v 24 H 0 V 20 c 0,-10 -8,8 -8,-7.5 s 8,2.5 8,-7.5 z " fill="#99cef3" transform="translate(1,1)"/>
<path d="m 0,0 H 20 H 28.92 v 24 H 0 V 20 c 0,-10 -8,8 -8,-7.5 s 8,2.5 8,-7.5 z " fill="#99cef3"/>
<g transform="translate(10,17)"><rect class="er" x="-5" y="-12" width="18.92" height="15.2" rx="4" ry="4"/><text class="et" y="-0.4">2</text></g>
</g>
<g transform="translate(20,35.6)">
<path d="m 0,8 A 8,8 0 0,1 8,0 H 15 l 6,4 3,0 6,-4 H 48.5 H 311.51 v 34.6 H 50 l -6,4 -3,0 -6,-4 h -7 a 8,8 0 0,0 -8,8 v 21.4 a 8,8 0 0,0 8,8 H 48.5 v 10 H 8 a 8,8 0 0,1 -8,-8 z M 159.76,5 h -46.83 v 5 c 0,10 -8,-8 -8,7.5 s 8,-2.5 8,7.5 v 6 h 46.83 z M 230.54,5 h -37.92 v 5 c 0,10 -8,-8 -8,7.5 s 8,-2.5 8,7.5 v 6 h 37.92 z M 302.36,5 h -37.92 v 5 c 0,10 -8,-8 -8,7.5 s 8,-2.5 8,7.5 v 6 h 37.92 z" fill="#1e437e" transform="translate(1,1)"/>
<path d="m 0,8 A 8,8 0 0,1 8,0 H 15 l 6,4 3,0 6,-4 H 48.5 H 311.51 v 34.6 H 50 l -6,4 -3,0 -6,-4 h -7 a 8,8 0 0,0 -8,8 v 21.4 a 8,8 0 0,0 8,8 H 48.5 v 10 H 8 a 8,8 0 0,1 -8,-8 z M 159.76,5 h -46.83 v 5 c 0,10 -8,-8 -8,7.5 s 8,-2.5 8,7.5 v 6 h 46.83 z M 230.54,5 h -37.92 v 5 c 0,10 -8,-8 -8,7.5 s 8,-2.5 8,7.5 v 6 h 37.92 z M 302.36,5 h -37.92 v 5 c 0,10 -8,-8 -8,7.5 s 8,-2.5 8,7.5 v 6 h 37.92 z" fill="#26549E"/>
<path d="m 0.5,7.5 A 7.5,7.5 0 0,1 8,0.5 H 15 l 6,4 3,0 6,-4 H 48 M 48,0.5 H 311.01 M 48,35.1 M 21.99,70.01 a 8.5,8.5 0 0,0 6.01,2.49 H 48 M 2.7,79.3 A 7.5,7.5 0 0,1 0.5,74 V 8" fill="none" stroke="#6787bb" stroke-width="2" stroke-linecap="round" transform="translate(0.5,0.5)"/>
<path d="M 160.26,5.5 v 26 h -46.83 M 107.83,24.3 l 3.68,-2.1 M 231.04,5.5 v 26 h -37.92 M 187.52,24.3 l 3.68,-2.1 M 302.86,5.5 v 26 h -37.92 M 259.34,24.3 l 3.68,-2.1" fill="none" stroke="#6787bb" stroke-width="1.2" stroke-linecap="round" transform="translate(0.2,0.2)"/>
<g transform="translate(10,5)"><rect class="is" x="-0.5" y="-0.2" width="15.5" height="15.5" rx="4" ry="4"/><text class="im" x="7.3" y="12.2">+</text></g>
<text class="bt" x="36" y="22">rotate</text>
<text class="bt" x="88.19" y="22">X</text>
<text class="bt" x="168.91" y="22">Y</text>
<text class="bt" x="239.69" y="22">Z</text>
<g transform="translate(113.93,6)">
<path d="m 0,0 H 20 H 44.83 v 24 H 0 V 20 c 0,-10 -8,8 -8,-7.5 s 8,2.5 8,-7.5 z " fill="#99cef3" transform="translate(1,1)"/>
<path d="m 0,0 H 20 H 44.83 v 24 H 0 V 20 c 0,-10 -8,8 -8,-7.5 s 8,2.5 8,-7.5 z " fill="#99cef3"/>
<g transform="translate(10,17)"><rect class="er" x="-5" y="-12" width="34.83" height="15.2" rx="4" ry="4"/><text class="et" y="-0.4">90°</text></g>
</g>
<g transform="translate(193.62,6)">
<path d="m 0,0 H 20 H 35.92 v 24 H 0 V 20 c 0,-10 -8,8 -8,-7.5 s 8,2.5 8,-7.5 z " fill="#99cef3" transform="translate(1,1)"/>
<path d="m 0,0 H 20 H 35.92 v 24 H 0 V 20 c 0,-10 -8,8 -8,-7.5 s 8,2.5 8,-7.5 z " fill="#99cef3"/>
<g transform="translate(10,17)"><rect class="er" x="-5" y="-12" width="25.92" height="15.2" rx="4" ry="4"/><text class="et" y="-0.4">0°</text></g>
</g>
<g transform="translate(265.44,6)">
<path d="m 0,0 H 20 H 35.92 v 24 H 0 V 20 c 0,-10 -8,8 -8,-7.5 s 8,2.5 8,-7.5 z " fill="#99cef3" transform="translate(1,1)"/>
<path d="m 0,0 H 20 H 35.92 v 24 H 0 V 20 c 0,-10 -8,8 -8,-7.5 s 8,2.5 8,-7.5 z " fill="#99cef3"/>
<g transform="translate(10,17)"><rect class="er" x="-5" y="-12" width="25.92" height="15.2" rx="4" ry="4"/><text class="et" y="-0.4">0°</text></g>
</g>
<g transform="translate(20,35.6)">
<path d="m 0,8 A 8,8 0 0,1 8,0 H 15 l 6,4 3,0 6,-4 H 40 H 491.58 v 34.6 H 8 a 8,8 0 0,1 -8,-8 z M 172.26,5 h -39.83 v 5 c 0,10 -8,-8 -8,7.5 s 8,-2.5 8,7.5 v 6 h 39.83 z M 280.07,5 h -30.92 v 5 c 0,10 -8,-8 -8,7.5 s 8,-2.5 8,7.5 v 6 h 30.92 z M 380.58,5 h -39.83 v 5 c 0,10 -8,-8 -8,7.5 s 8,-2.5 8,7.5 v 6 h 39.83 z M 482.23,5 h -39.83 v 5 c 0,10 -8,-8 -8,7.5 s 8,-2.5 8,7.5 v 6 h 39.83 z" fill="#004e04" transform="translate(1,1)"/>
<path d="m 0,8 A 8,8 0 0,1 8,0 H 15 l 6,4 3,0 6,-4 H 40 H 491.58 v 34.6 H 8 a 8,8 0 0,1 -8,-8 z M 172.26,5 h -39.83 v 5 c 0,10 -8,-8 -8,7.5 s 8,-2.5 8,7.5 v 6 h 39.83 z M 280.07,5 h -30.92 v 5 c 0,10 -8,-8 -8,7.5 s 8,-2.5 8,7.5 v 6 h 30.92 z M 380.58,5 h -39.83 v 5 c 0,10 -8,-8 -8,7.5 s 8,-2.5 8,7.5 v 6 h 39.83 z M 482.23,5 h -39.83 v 5 c 0,10 -8,-8 -8,7.5 s 8,-2.5 8,7.5 v 6 h 39.83 z" fill="#006205"/>
<path d="m 0.5,7.5 A 7.5,7.5 0 0,1 8,0.5 H 15 l 6,4 3,0 6,-4 H 39.5 M 39.5,0.5 H 491.08 M 2.7,31.9 A 7.5,7.5 0 0,1 0.5,26.6 V 8" fill="none" stroke="#4c9150" stroke-width="2" stroke-linecap="round" transform="translate(0.5,0.5)"/>
<path d="M 172.76,5.5 v 26 h -39.83 M 127.33,24.3 l 3.68,-2.1 M 280.57,5.5 v 26 h -30.92 M 244.04,24.3 l 3.68,-2.1 M 381.08,5.5 v 26 h -39.83 M 335.65,24.3 l 3.68,-2.1 M 482.73,5.5 v 26 h -39.83 M 437.3,24.3 l 3.68,-2.1" fill="none" stroke="#4c9150" stroke-width="1.2" stroke-linecap="round" transform="translate(0.2,0.2)"/>
<text class="bt" x="10" y="22">torus  </text>
<text class="bt" x="64.89" y="22">radius1</text>
<text class="bt" x="181.61" y="22">radius2</text>
<text class="bt" x="289.42" y="22">sides</text>
<text class="bt" x="389.93" y="22">faces</text>
<g transform="translate(133.43,6)">
<path d="m 0,0 H 20 H 37.83 v 24 H 0 V 20 c 0,-10 -8,8 -8,-7.5 s 8,2.5 8,-7.5 z " fill="#99cef3" transform="translate(1,1)"/>
<path d="m 0,0 H 20 H 37.83 v 24 H 0 V 20 c 0,-10 -8,8 -8,-7.5 s 8,2.5 8,-7.5 z " fill="#99cef3"/>
<g transform="translate(10,17)"><rect class="er" x="-5" y="-12" width="27.83" height="15.2" rx="4" ry="4"/><text class="et" y="-0.4">12</text></g>
</g>
<g transform="translate(250.14,6)">
<path d="m 0,0 H 20 H 28.92 v 24 H 0 V 20 c 0,-10 -8,8 -8,-7.5 s 8,2.5 8,-7.5 z " fill="#99cef3" transform="translate(1,1)"/>
<path d="m 0,0 H 20 H 28.92 v 24 H 0 V 20 c 0,-10 -8,8 -8,-7.5 s 8,2.5 8,-7.5 z " fill="#99cef3"/>
<g transform="translate(10,17)"><rect class="er" x="-5" y="-12" width="18.92" height="15.2" rx="4" ry="4"/><text class="et" y="-0.4">3</text></g>
</g>
<g transform="translate(341.75,6)">
<path d="m 0,0 H 20 H 37.83 v 24 H 0 V 20 c 0,-10 -8,8 -8,-7.5 s 8,2.5 8,-7.5 z " fill="#99cef3" transform="translate(1,1)"/>
<path d="m 0,0 H 20 H 37.83 v 24 H 0 V 20 c 0,-10 -8,8 -8,-7.5 s 8,2.5 8,-7.5 z " fill="#99cef3"/>
<g transform="translate(10,17)"><rect class="er" x="-5" y="-12" width="27.83" height="15.2" rx="4" ry="4"/><text class="et" y="-0.4">40</text></g>
</g>
<g transform="translate(443.4,6)">
<path d="m 0,0 H 20 H 37.83 v 24 H 0 V 20 c 0,-10 -8,8 -8,-7.5 s 8,2.5 8,-7.5 z " fill="#99cef3" transform="translate(1,1)"/>
<path d="m 0,0 H 20 H 37.83 v 24 H 0 V 20 c 0,-10 -8,8 -8,-7.5 s 8,2.5 8,-7.5 z " fill="#99cef3"/>
<g transform="translate(10,17)"><rect class="er" x="-5" y="-12" width="27.83" height="15.2" rx="4" ry="4"/><text class="et" y="-0.4">20</text></g>
</g>
</g>
</g>
</g>
</g>
<g transform="translate(63.38,391.4)">
<path d="m 0,8 A 8,8 0 0,1 8,0 H 15 l 6,4 3,0 6,-4 H 48.5 H 301.98 v 34.6 H 50 l -6,4 -3,0 -6,-4 h -7 a 8,8 0 0,0 -8,8 v 22.8 a 8,8 0 0,0 8,8 H 48.5 v 10 H 8 a 8,8 0 0,1 -8,-8 z M 164.23,5 h -30.92 v 5 c 0,10 -8,-8 -8,7.5 s 8,-2.5 8,7.5 v 6 h 30.92 z M 228.01,5 h -30.92 v 5 c 0,10 -8,-8 -8,7.5 s 8,-2.5 8,7.5 v 6 h 30.92 z M 292.83,5 h -30.92 v 5 c 0,10 -8,-8 -8,7.5 s 8,-2.5 8,7.5 v 6 h 30.92 z" fill="#1e437e" transform="translate(1,1)"/>
<path d="m 0,8 A 8,8 0 0,1 8,0 H 15 l 6,4 3,0 6,-4 H 48.5 H 301.98 v 34.6 H 50 l -6,4 -3,0 -6,-4 h -7 a 8,8 0 0,0 -8,8 v 22.8 a 8,8 0 0,0 8,8 H 48.5 v 10 H 8 a 8,8 0 0,1 -8,-8 z M 164.23,5 h -30.92 v 5 c 0,10 -8,-8 -8,7.5 s 8,-2.5 8,7.5 v 6 h 30.92 z M 228.01,5 h -30.92 v 5 c 0,10 -8,-8 -8,7.5 s 8,-2.5 8,7.5 v 6 h 30.92 z M 292.83,5 h -30.92 v 5 c 0,10 -8,-8 -8,7.5 s 8,-2.5 8,7.5 v 6 h 30.92 z" fill="#26549E"/>
<path d="m 0.5,7.5 A 7.5,7.5 0 0,1 8,0.5 H 15 l 6,4 3,0 6,-4 H 48 M 48,0.5 H 301.48 M 48,35.1 M 21.99,71.41 a 8.5,8.5 0 0,0 6.01,2.49 H 48 M 2.7,80.7 A 7.5,7.5 0 0,1 0.5,75.4 V 8" fill="none" stroke="#6787bb" stroke-width="2" stroke-linecap="round" transform="translate(0.5,0.5)"/>
<path d="M 164.73,5.5 v 26 h -30.92 M 128.21,24.3 l 3.68,-2.1 M 228.51,5.5 v 26 h -30.92 M 191.99,24.3 l 3.68,-2.1 M 293.33,5.5 v 26 h -30.92 M 256.81,24.3 l 3.68,-2.1" fill="none" stroke="#6787bb" stroke-width="1.2" stroke-linecap="round" transform="translate(0.2,0.2)"/>
<g transform="translate(10,5)"><rect class="is" x="-0.5" y="-0.2" width="15.5" height="15.5" rx="4" ry="4"/><text class="im" x="7.3" y="12.2">+</text></g>
<text class="bt" x="36" y="22">translate</text>
<text class="bt" x="108.56" y="22">X</text>
<text class="bt" x="173.38" y="22">Y</text>
<text class="bt" x="237.16" y="22">Z</text>
<g transform="translate(134.31,6)">
<path d="m 0,0 H 20 H 28.92 v 24 H 0 V 20 c 0,-10 -8,8 -8,-7.5 s 8,2.5 8,-7.5 z " fill="#99cef3" transform="translate(1,1)"/>
<path d="m 0,0 H 20 H 28.92 v 24 H 0 V 20 c 0,-10 -8,8 -8,-7.5 s 8,2.5 8,-7.5 z " fill="#99cef3"/>
<g transform="translate(10,17)"><rect class="er" x="-5" y="-12" width="18.92" height="15.2" rx="4" ry="4"/><text class="et" y="-0.4">0</text></g>
</g>
<g transform="translate(198.09,6)">
<path d="m 0,0 H 20 H 28.92 v 24 H 0 V 20 c 0,-10 -8,8 -8,-7.5 s 8,2.5 8,-7.5 z " fill="#99cef3" transform="translate(1,1)"/>
<path d="m 0,0 H 20 H 28.92 v 24 H 0 V 20 c 0,-10 -8,8 -8,-7.5 s 8,2.5 8,-7.5 z " fill="#99cef3"/>
<g transform="translate(10,17)"><rect class="er" x="-5" y="-12" width="18.92" height="15.2" rx="4" ry="4"/><text class="et" y="-0.4">0</text></g>
</g>
<g transform="translate(262.91,6)">
<path d="m 0,0 H 20 H 28.92 v 24 H 0 V 20 c 0,-10 -8,8 -8,-7.5 s 8,2.5 8,-7.5 z " fill="#99cef3" transform="translate(1,1)"/>
<path d="m 0,0 H 20 H 28.92 v 24 H 0 V 20 c 0,-10 -8,8 -8,-7.5 s 8,2.5 8,-7.5 z " fill="#99cef3"/>
<g transform="translate(10,17)"><rect class="er" x="-5" y="-12" width="18.92" height="15.2" rx="4" ry="4"/><text class="et" y="-0.4">5</text></g>
</g>
<g transform="translate(20,35.6)">
<path d="m 0,8 A 8,8 0 0,1 8,0 H 15 l 6,4 3,0 6,-4 H 40 H 572.48 v 36 H 8 a 8,8 0 0,1 -8,-8 z M 192.16,5 h -39.83 v 5 c 0,10 -8,-8 -8,7.5 s 8,-2.5 8,7.5 v 6 h 39.83 z M 342.88,5 h -39.83 v 5 c 0,10 -8,-8 -8,7.5 s 8,-2.5 8,7.5 v 6 h 39.83 z M 452.03,5 h -39.83 v 5 c 0,10 -8,-8 -8,7.5 s 8,-2.5 8,7.5 v 6 h 39.83 z" fill="#004e04" transform="translate(1,1)"/>
<path d="m 0,8 A 8,8 0 0,1 8,0 H 15 l 6,4 3,0 6,-4 H 40 H 572.48 v 36 H 8 a 8,8 0 0,1 -8,-8 z M 192.16,5 h -39.83 v 5 c 0,10 -8,-8 -8,7.5 s 8,-2.5 8,7.5 v 6 h 39.83 z M 342.88,5 h -39.83 v 5 c 0,10 -8,-8 -8,7.5 s 8,-2.5 8,7.5 v 6 h 39.83 z M 452.03,5 h -39.83 v 5 c 0,10 -8,-8 -8,7.5 s 8,-2.5 8,7.5 v 6 h 39.83 z" fill="#006205"/>
<path d="m 0.5,7.5 A 7.5,7.5 0 0,1 8,0.5 H 15 l 6,4 3,0 6,-4 H 39.5 M 39.5,0.5 H 571.98 M 2.7,33.3 A 7.5,7.5 0 0,1 0.5,28 V 8" fill="none" stroke="#4c9150" stroke-width="2" stroke-linecap="round" transform="translate(0.5,0.5)"/>
<path d="M 192.66,5.5 v 26 h -39.83 M 147.23,24.3 l 3.68,-2.1 M 343.38,5.5 v 26 h -39.83 M 297.95,24.3 l 3.68,-2.1 M 452.53,5.5 v 26 h -39.83 M 407.1,24.3 l 3.68,-2.1" fill="none" stroke="#4c9150" stroke-width="1.2" stroke-linecap="round" transform="translate(0.2,0.2)"/>
<text class="bt" x="10" y="22">cylinder  </text>
<text class="bt" x="84.8" y="22">radius1</text>
<g transform="translate(201.51,22)"><g><path d="M9.6 -7 V-10.2 a5.9 5.9 0 0 1 11.8 0 V-7" fill="none" stroke="#555" stroke-width="3.6"/><path d="M9.6 -7 V-10.2 a5.9 5.9 0 0 1 11.8 0 V-7" fill="none" stroke="#e8e8e8" stroke-width="2"/><rect x="6" y="-8.2" width="19" height="14.8" rx="1.6" fill="url(#lockg)" stroke="#9a6a00" stroke-width="0.8"/><circle cx="15.5" cy="-2.2" r="1.3" fill="#222"/><path d="M15.5 -2.2 L14.7 1.6 H16.3 Z" fill="#222"/></g></g>
<text class="bt" x="235.51" y="22">radius2</text>
<text class="bt" x="352.23" y="22">height</text>
<g transform="translate(461.38,22)"><rect class="er" x="-5" y="-12" width="111.09" height="15.2" rx="4" ry="4"/><text class="et" y="-0.4">not centered<tspan fill="#006205"> ▾</tspan></text></g>
<g transform="translate(153.33,6)">
<path d="m 0,0 H 20 H 37.83 v 24 H 0 V 20 c 0,-10 -8,8 -8,-7.5 s 8,2.5 8,-7.5 z " fill="#99cef3" transform="translate(1,1)"/>
<path d="m 0,0 H 20 H 37.83 v 24 H 0 V 20 c 0,-10 -8,8 -8,-7.5 s 8,2.5 8,-7.5 z " fill="#99cef3"/>
<g transform="translate(10,17)"><rect class="er" x="-5" y="-12" width="27.83" height="15.2" rx="4" ry="4"/><text class="et" y="-0.4">18</text></g>
</g>
<g transform="translate(304.05,6)">
<path d="m 0,0 H 20 H 37.83 v 24 H 0 V 20 c 0,-10 -8,8 -8,-7.5 s 8,2.5 8,-7.5 z " fill="#99cef3" transform="translate(1,1)"/>
<path d="m 0,0 H 20 H 37.83 v 24 H 0 V 20 c 0,-10 -8,8 -8,-7.5 s 8,2.5 8,-7.5 z " fill="#99cef3"/>
<g transform="translate(10,17)"><rect class="er" x="-5" y="-12" width="27.83" height="15.2" rx="4" ry="4"/><text class="et" y="-0.4">18</text></g>
</g>
<g transform="translate(413.2,6)">
<path d="m 0,0 H 20 H 37.83 v 24 H 0 V 20 c 0,-10 -8,8 -8,-7.5 s 8,2.5 8,-7.5 z " fill="#99cef3" transform="translate(1,1)"/>
<path d="m 0,0 H 20 H 37.83 v 24 H 0 V 20 c 0,-10 -8,8 -8,-7.5 s 8,2.5 8,-7.5 z " fill="#99cef3"/>
<g transform="translate(10,17)"><rect class="er" x="-5" y="-12" width="27.83" height="15.2" rx="4" ry="4"/><text class="et" y="-0.4">50</text></g>
</g>
</g>
</g>
</g>
</g>
</g>
</g>
<g id="zoomctl" fill="none" stroke="#999" stroke-opacity="0.7" stroke-width="1.5">
<circle cx="703.9" cy="565.3" r="11"/><path d="M703.9 549.5V581M688 565.3H719.8" stroke-width="1.2"/><circle cx="703.9" cy="565.3" r="4" fill="#999" fill-opacity="0.7" stroke="none"/>
<circle cx="703.9" cy="609.1" r="15.2" stroke="#bbb" stroke-opacity="1"/><path d="M696.4 609.1H711.4M703.9 601.6V616.6" stroke="#aaa" stroke-opacity="1"/>
<circle cx="703.9" cy="642.5" r="15.2" stroke="#bbb" stroke-opacity="1"/><path d="M696.4 642.5H711.4" stroke="#aaa" stroke-opacity="1"/>
</g>
<rect x="732" y="161.2" width="10" height="346.4" rx="5" ry="5" fill="#ccc"/>
<rect x="173.9" y="667" width="375.4" height="10" rx="5" ry="5" fill="#ccc"/>
</svg></div>
<div id="resizer"><i style="left:9px;top:325px"></i><i style="left:12px;top:325px"></i><i style="left:9px;top:329px"></i><i style="left:12px;top:329px"></i><i style="left:9px;top:333px"></i><i style="left:12px;top:333px"></i><i style="left:9px;top:337px"></i><i style="left:12px;top:337px"></i><i style="left:9px;top:341px"></i><i style="left:12px;top:341px"></i><i style="left:9px;top:345px"></i><i style="left:12px;top:345px"></i><i style="left:9px;top:349px"></i><i style="left:12px;top:349px"></i><i style="left:9px;top:353px"></i><i style="left:12px;top:353px"></i></div>
<div id="view"><svg width="456" height="552" viewBox="910 89 456 552" style="position:absolute;left:0;top:0">
<defs>
<linearGradient id="gb" x1="0" y1="0" x2="1" y2="0"><stop offset="0" stop-color="#8ebcbc"/><stop offset="0.1" stop-color="#a0cfcf"/><stop offset="0.45" stop-color="#abdcdc"/><stop offset="0.8" stop-color="#a2d2d2"/><stop offset="1" stop-color="#93c0c0"/></linearGradient>
<linearGradient id="gv" x1="0" y1="0" x2="0" y2="1"><stop offset="0" stop-color="#fff" stop-opacity="0.25"/><stop offset="0.35" stop-color="#fff" stop-opacity="0"/><stop offset="0.75" stop-color="#000" stop-opacity="0"/><stop offset="1" stop-color="#000" stop-opacity="0.12"/></linearGradient>
<linearGradient id="gi" x1="0" y1="0" x2="1" y2="0"><stop offset="0" stop-color="#a6d3d3"/><stop offset="0.45" stop-color="#96c2c2"/><stop offset="1" stop-color="#7da3a3"/></linearGradient>
<radialGradient id="gh" cx="0.55" cy="0.3" r="0.45"><stop offset="0" stop-color="#d2ffff" stop-opacity="0.9"/><stop offset="1" stop-color="#c8f8f8" stop-opacity="0"/></radialGradient>
<linearGradient id="gr" x1="0" y1="0" x2="1" y2="1"><stop offset="0" stop-color="#b8eaea"/><stop offset="0.5" stop-color="#a4d4d4"/><stop offset="1" stop-color="#86b2b2"/></linearGradient>
</defs>
<path d="M1038.5 280.7 L1419.7 355.3 L1345.8 753.1 L705.7 493.6 Z" fill="#f3f3f3"/>
<path d="M708.6 491.8L1346.6 749.0M707.9 494.5L1040.1 281.0M711.5 489.9L1347.3 744.9M710.0 495.4L1041.6 281.3M714.3 488.1L1348.1 740.8M712.2 496.2L1043.2 281.6M717.1 486.3L1348.8 736.8M714.4 497.1L1044.7 281.9M719.9 484.5L1349.6 732.8M716.6 498.0L1046.3 282.3M722.7 482.7L1350.3 728.9M718.8 498.9L1047.9 282.6M725.5 480.9L1351.0 725.0M721.0 499.8L1049.4 282.9M728.2 479.2L1351.8 721.1M723.2 500.7L1051.0 283.2M731.0 477.4L1352.5 717.3M725.4 501.6L1052.6 283.5M736.4 474.0L1353.9 709.8M729.9 503.4L1055.7 284.1M739.0 472.3L1354.5 706.1M732.1 504.3L1057.3 284.4M741.7 470.6L1355.2 702.4M734.4 505.2L1058.9 284.7M744.3 468.9L1355.9 698.8M736.6 506.1L1060.5 285.0M746.9 467.2L1356.6 695.2M738.9 507.1L1062.1 285.3M749.5 465.6L1357.2 691.7M741.2 508.0L1063.7 285.7M752.1 463.9L1357.9 688.2M743.4 508.9L1065.3 286.0M754.6 462.3L1358.5 684.7M745.7 509.8L1066.9 286.3M757.2 460.7L1359.2 681.2M748.0 510.8L1068.5 286.6M762.2 457.5L1360.4 674.5M752.6 512.6L1071.7 287.2M764.7 455.9L1361.0 671.1M754.9 513.6L1073.3 287.5M767.2 454.3L1361.6 667.8M757.3 514.5L1074.9 287.9M769.6 452.7L1362.3 664.5M759.6 515.5L1076.6 288.2M772.0 451.2L1362.9 661.3M761.9 516.4L1078.2 288.5M774.5 449.6L1363.5 658.1M764.3 517.4L1079.8 288.8M776.9 448.1L1364.0 654.9M766.7 518.3L1081.4 289.1M779.3 446.6L1364.6 651.7M769.0 519.3L1083.1 289.4M781.6 445.0L1365.2 648.6M771.4 520.2L1084.7 289.8M786.3 442.0L1366.4 642.4M776.2 522.2L1088.0 290.4M788.6 440.6L1366.9 639.4M778.6 523.1L1089.6 290.7M791.0 439.1L1367.5 636.4M781.0 524.1L1091.3 291.0M793.2 437.6L1368.0 633.4M783.4 525.1L1092.9 291.4M795.5 436.2L1368.6 630.5M785.8 526.1L1094.6 291.7M797.8 434.7L1369.1 627.5M788.2 527.1L1096.2 292.0M800.0 433.3L1369.7 624.7M790.7 528.0L1097.9 292.3M802.3 431.8L1370.2 621.8M793.1 529.0L1099.6 292.7M804.5 430.4L1370.7 618.9M795.6 530.0L1101.2 293.0M808.9 427.6L1371.8 613.3M800.5 532.0L1104.6 293.7M811.1 426.2L1372.3 610.6M803.0 533.0L1106.3 294.0M813.2 424.8L1372.8 607.8M805.5 534.1L1107.9 294.3M815.4 423.5L1373.3 605.1M808.0 535.1L1109.6 294.6M817.5 422.1L1373.8 602.4M810.5 536.1L1111.3 295.0M819.6 420.7L1374.3 599.7M813.0 537.1L1113.0 295.3M821.7 419.4L1374.8 597.1M815.5 538.1L1114.7 295.6M823.8 418.0L1375.3 594.4M818.1 539.2L1116.4 296.0M825.9 416.7L1375.7 591.8M820.6 540.2L1118.1 296.3M830.0 414.1L1376.7 586.7M825.7 542.3L1121.5 297.0M832.1 412.8L1377.2 584.2M828.3 543.3L1123.2 297.3M834.1 411.5L1377.6 581.6M830.9 544.4L1124.9 297.6M836.1 410.2L1378.1 579.2M833.5 545.4L1126.6 298.0M838.1 408.9L1378.6 576.7M836.1 546.5L1128.4 298.3M840.1 407.6L1379.0 574.2M838.7 547.5L1130.1 298.6M842.1 406.3L1379.5 571.8M841.3 548.6L1131.8 299.0M844.1 405.1L1379.9 569.4M843.9 549.6L1133.5 299.3M846.0 403.8L1380.4 567.0M846.6 550.7L1135.3 299.7M849.9 401.4L1381.2 562.3M851.9 552.9L1138.7 300.3M851.8 400.1L1381.7 559.9M854.5 553.9L1140.5 300.7M853.8 398.9L1382.1 557.6M857.2 555.0L1142.2 301.0M855.7 397.7L1382.5 555.3M859.9 556.1L1144.0 301.4M857.5 396.5L1382.9 553.1M862.6 557.2L1145.7 301.7M859.4 395.3L1383.4 550.8M865.3 558.3L1147.5 302.0M861.3 394.1L1383.8 548.6M868.0 559.4L1149.3 302.4M863.1 392.9L1384.2 546.3M870.7 560.5L1151.0 302.7M865.0 391.7L1384.6 544.1M873.5 561.6L1152.8 303.1M868.6 389.4L1385.4 539.8M879.0 563.8L1156.3 303.8M870.4 388.2L1385.8 537.6M881.7 565.0L1158.1 304.1M872.2 387.1L1386.2 535.5M884.5 566.1L1159.9 304.5M874.0 385.9L1386.6 533.4M887.3 567.2L1161.7 304.8M875.8 384.8L1387.0 531.3M890.1 568.4L1163.5 305.2M877.6 383.7L1387.4 529.2M892.9 569.5L1165.3 305.5M879.3 382.5L1387.8 527.1M895.7 570.6L1167.1 305.9M881.1 381.4L1388.1 525.1M898.5 571.8L1168.9 306.2M882.8 380.3L1388.5 523.0M901.4 572.9L1170.7 306.6M886.3 378.1L1389.3 519.0M907.1 575.2L1174.3 307.3M888.0 377.0L1389.6 517.0M909.9 576.4L1176.1 307.6M889.7 375.9L1390.0 515.0M912.8 577.6L1177.9 308.0M891.4 374.8L1390.4 513.1M915.7 578.7L1179.8 308.4M893.1 373.8L1390.7 511.1M918.6 579.9L1181.6 308.7M894.7 372.7L1391.1 509.2M921.5 581.1L1183.4 309.1M896.4 371.6L1391.4 507.3M924.4 582.3L1185.3 309.4M898.0 370.6L1391.8 505.4M927.4 583.5L1187.1 309.8M899.7 369.5L1392.2 503.5M930.3 584.7L1188.9 310.2M902.9 367.4L1392.8 499.7M936.2 587.1L1192.6 310.9M904.6 366.4L1393.2 497.9M939.2 588.3L1194.5 311.2M906.2 365.4L1393.5 496.1M942.2 589.5L1196.3 311.6M907.8 364.4L1393.9 494.2M945.2 590.7L1198.2 312.0M909.3 363.3L1394.2 492.4M948.2 591.9L1200.1 312.3M910.9 362.3L1394.5 490.6M951.3 593.2L1201.9 312.7M912.5 361.3L1394.9 488.8M954.3 594.4L1203.8 313.1M914.1 360.3L1395.2 487.1M957.3 595.6L1205.7 313.4M915.6 359.3L1395.5 485.3M960.4 596.9L1207.6 313.8M918.7 357.4L1396.2 481.8M966.6 599.4L1211.3 314.5M920.2 356.4L1396.5 480.1M969.7 600.6L1213.2 314.9M921.8 355.4L1396.8 478.4M972.8 601.9L1215.1 315.3M923.3 354.4L1397.1 476.7M975.9 603.1L1217.0 315.6M924.8 353.5L1397.4 475.0M979.0 604.4L1218.9 316.0M926.3 352.5L1397.7 473.4M982.2 605.7L1220.8 316.4M927.8 351.6L1398.1 471.7M985.3 607.0L1222.7 316.8M929.2 350.6L1398.4 470.1M988.5 608.3L1224.6 317.1M930.7 349.7L1398.7 468.4M991.7 609.6L1226.6 317.5M933.6 347.8L1399.3 465.2M998.1 612.1L1230.4 318.3M935.1 346.9L1399.6 463.6M1001.3 613.5L1232.3 318.6M936.5 346.0L1399.9 462.0M1004.6 614.8L1234.3 319.0M938.0 345.0L1400.2 460.4M1007.8 616.1L1236.2 319.4M939.4 344.1L1400.4 458.8M1011.1 617.4L1238.2 319.8M940.8 343.2L1400.7 457.3M1014.3 618.7L1240.1 320.2M942.2 342.3L1401.0 455.7M1017.6 620.1L1242.1 320.5M943.6 341.4L1401.3 454.2M1020.9 621.4L1244.0 320.9M945.0 340.5L1401.6 452.6M1024.2 622.7L1246.0 321.3M947.8 338.7L1402.2 449.6M1030.9 625.5L1249.9 322.1M949.2 337.9L1402.4 448.1M1034.3 626.8L1251.9 322.5M950.6 337.0L1402.7 446.6M1037.6 628.2L1253.9 322.9M951.9 336.1L1403.0 445.1M1041.0 629.5L1255.8 323.2M953.3 335.3L1403.3 443.7M1044.4 630.9L1257.8 323.6M954.6 334.4L1403.5 442.2M1047.8 632.3L1259.8 324.0M956.0 333.5L1403.8 440.7M1051.2 633.7L1261.8 324.4M957.3 332.7L1404.1 439.3M1054.7 635.1L1263.8 324.8M958.6 331.8L1404.3 437.9M1058.1 636.5L1265.8 325.2M961.3 330.1L1404.9 435.0M1065.1 639.3L1269.8 326.0M962.6 329.3L1405.1 433.6M1068.6 640.7L1271.8 326.4M963.9 328.5L1405.4 432.2M1072.1 642.1L1273.9 326.8M965.2 327.6L1405.6 430.8M1075.6 643.6L1275.9 327.2M966.5 326.8L1405.9 429.5M1079.1 645.0L1277.9 327.6M967.7 326.0L1406.1 428.1M1082.7 646.4L1279.9 328.0M969.0 325.2L1406.4 426.7M1086.3 647.9L1282.0 328.4M970.3 324.4L1406.7 425.4M1089.8 649.3L1284.0 328.8M971.6 323.6L1406.9 424.0M1093.4 650.8L1286.1 329.2M974.1 321.9L1407.4 421.4M1100.7 653.7L1290.2 330.0M975.3 321.2L1407.6 420.0M1104.3 655.2L1292.2 330.4M976.6 320.4L1407.9 418.7M1108.0 656.7L1294.3 330.8M977.8 319.6L1408.1 417.4M1111.7 658.2L1296.3 331.2M979.0 318.8L1408.4 416.1M1115.4 659.7L1298.4 331.6M980.2 318.0L1408.6 414.8M1119.1 661.2L1300.5 332.0M981.5 317.2L1408.8 413.6M1122.8 662.7L1302.6 332.4M982.7 316.4L1409.1 412.3M1126.5 664.2L1304.7 332.8M983.9 315.7L1409.3 411.0M1130.3 665.7L1306.7 333.2M986.3 314.1L1409.8 408.5M1137.8 668.8L1310.9 334.0M987.5 313.4L1410.0 407.3M1141.6 670.3L1313.0 334.4M988.6 312.6L1410.2 406.0M1145.5 671.9L1315.1 334.8M989.8 311.9L1410.5 404.8M1149.3 673.5L1317.3 335.3M991.0 311.1L1410.7 403.6M1153.1 675.0L1319.4 335.7M992.1 310.4L1410.9 402.4M1157.0 676.6L1321.5 336.1M993.3 309.6L1411.1 401.2M1160.9 678.2L1323.6 336.5M994.5 308.9L1411.4 400.0M1164.8 679.7L1325.8 336.9M995.6 308.2L1411.6 398.8M1168.7 681.3L1327.9 337.3M997.9 306.7L1412.0 396.4M1176.6 684.5L1332.2 338.2M999.0 306.0L1412.2 395.2M1180.6 686.1L1334.3 338.6M1000.2 305.3L1412.5 394.1M1184.6 687.8L1336.5 339.0M1001.3 304.5L1412.7 392.9M1188.6 689.4L1338.6 339.4M1002.4 303.8L1412.9 391.8M1192.6 691.0L1340.8 339.9M1003.5 303.1L1413.1 390.6M1196.7 692.7L1343.0 340.3M1004.6 302.4L1413.3 389.5M1200.7 694.3L1345.1 340.7M1005.7 301.7L1413.5 388.4M1204.8 696.0L1347.3 341.1M1006.8 301.0L1413.7 387.2M1208.9 697.6L1349.5 341.6M1009.0 299.6L1414.1 385.0M1217.2 701.0L1353.9 342.4M1010.1 298.9L1414.4 383.9M1221.3 702.7L1356.1 342.9M1011.2 298.2L1414.6 382.8M1225.5 704.3L1358.3 343.3M1012.2 297.5L1414.8 381.7M1229.7 706.0L1360.5 343.7M1013.3 296.9L1415.0 380.6M1233.9 707.8L1362.7 344.1M1014.4 296.2L1415.2 379.5M1238.1 709.5L1364.9 344.6M1015.4 295.5L1415.4 378.5M1242.4 711.2L1367.1 345.0M1016.5 294.8L1415.6 377.4M1246.6 712.9L1369.4 345.5M1017.5 294.2L1415.8 376.3M1250.9 714.7L1371.6 345.9M1019.6 292.8L1416.1 374.2M1259.6 718.2L1376.1 346.8M1020.6 292.2L1416.3 373.2M1263.9 719.9L1378.3 347.2M1021.7 291.5L1416.5 372.1M1268.3 721.7L1380.6 347.6M1022.7 290.8L1416.7 371.1M1272.7 723.5L1382.8 348.1M1023.7 290.2L1416.9 370.1M1277.1 725.3L1385.1 348.5M1024.7 289.5L1417.1 369.0M1281.5 727.1L1387.4 349.0M1025.7 288.9L1417.3 368.0M1286.0 728.9L1389.6 349.4M1026.8 288.3L1417.5 367.0M1290.4 730.7L1391.9 349.9M1027.8 287.6L1417.7 366.0M1294.9 732.5L1394.2 350.3M1029.8 286.3L1418.0 364.0M1304.0 736.2L1398.8 351.2M1030.7 285.7L1418.2 363.0M1308.6 738.0L1401.1 351.7M1031.7 285.1L1418.4 362.0M1313.1 739.9L1403.4 352.1M1032.7 284.4L1418.6 361.1M1317.7 741.7L1405.7 352.6M1033.7 283.8L1418.8 360.1M1322.4 743.6L1408.0 353.0M1034.7 283.2L1419.0 359.1M1327.0 745.5L1410.3 353.5M1035.6 282.6L1419.1 358.2M1331.7 747.4L1412.7 353.9M1036.6 282.0L1419.3 357.2M1336.4 749.3L1415.0 354.4M1037.6 281.3L1419.5 356.2M1341.1 751.2L1417.3 354.8" stroke="#cfcfcf" stroke-width="0.5" fill="none" stroke-opacity="0.8"/>
<path d="M705.7 493.6L1345.8 753.1M705.7 493.6L1038.5 280.7M733.7 475.7L1353.2 713.5M727.6 502.5L1054.2 283.8M759.7 459.1L1359.8 677.8M750.3 511.7L1070.1 286.9M784.0 443.5L1365.8 645.5M773.8 521.2L1086.3 290.1M806.7 429.0L1371.2 616.1M798.0 531.0L1102.9 293.3M828.0 415.4L1376.2 589.3M823.2 541.2L1119.8 296.6M848.0 402.6L1380.8 564.6M849.2 551.8L1137.0 300.0M866.8 390.6L1385.0 541.9M876.2 562.7L1154.6 303.4M884.6 379.2L1388.9 521.0M904.2 574.1L1172.5 306.9M901.3 368.5L1392.5 501.6M933.3 585.9L1190.8 310.5M917.2 358.3L1395.8 483.6M963.5 598.1L1209.4 314.2M932.2 348.7L1399.0 466.8M994.9 610.8L1228.5 317.9M946.4 339.6L1401.9 451.1M1027.6 624.1L1247.9 321.7M959.9 331.0L1404.6 436.4M1061.6 637.9L1267.8 325.6M972.8 322.7L1407.2 422.7M1097.1 652.3L1288.1 329.6M985.1 314.9L1409.6 409.8M1134.0 667.3L1308.8 333.6M996.8 307.4L1411.8 397.6M1172.7 682.9L1330.0 337.8M1007.9 300.3L1413.9 386.1M1213.0 699.3L1351.7 342.0M1018.6 293.5L1416.0 375.3M1255.2 716.4L1373.8 346.3M1028.8 287.0L1417.9 365.0M1299.5 734.3L1396.5 350.8M1038.5 280.7L1419.7 355.3M1345.8 753.1L1419.7 355.3" stroke="#959595" stroke-width="0.9" fill="none"/>
<path d="M1124.2 412.5L917.2 358.3" stroke="#ff2a2a" stroke-width="1.2" stroke-dasharray="2.2 3.6" fill="none"/>
<path d="M1124.2 412.5L1395.8 483.6" stroke="#ff2020" stroke-width="1.15" fill="none"/>
<path d="M1124.2 412.5L963.5 598.1" stroke="#22b422" stroke-width="1.2" stroke-dasharray="2.2 3.6" fill="none"/>
<path d="M1124.2 412.5L1209.4 314.2" stroke="#2fb82f" stroke-width="1.05" fill="none"/>
<path d="M1124.2 412.5L1121.5 548" stroke="#8a8ab4" stroke-width="1.2" stroke-dasharray="2 2.5" fill="none"/>
<path d="M1124.2 412.5L1126.5 229" stroke="#2c2c98" stroke-width="1.1" fill="none"/>
<path d="M1123.9 236.9L1128.9 237.7M1123.5 265.6L1128.5 266.4M1123.2 292.8L1128.2 293.6M1122.9 317.2L1127.9 318.0M1122.6 341.5L1127.6 342.3M1122.3 365.9L1127.3 366.7M1122.0 388.8L1127.0 389.6M1121.2 436.7L1126.2 437.5M1121.0 447.0L1126.0 447.8M1120.8 459.7L1125.8 460.5M1120.5 474.4L1125.5 475.2M1120.2 489.7L1125.2 490.5M1119.9 505.7L1124.9 506.5M1119.5 523.7L1124.5 524.5M1119.0 547.7L1124.0 548.5" stroke="#999" stroke-width="1" fill="none" stroke-opacity="0.8"/>
<text transform="matrix(1,0.155,0,1,1119.3,225.9)" font-family="'DejaVu Sans Light','DejaVu Sans',sans-serif" font-weight="200" font-size="22.5" fill="#111" textLength="15" lengthAdjust="spacingAndGlyphs">Z</text>
<g id="cup">
<ellipse cx="1253.4" cy="287" rx="24.4" ry="25.4" fill="none" stroke="#8fbcbc" stroke-width="14"/>
<ellipse cx="1253.6" cy="286.6" rx="24.4" ry="25.4" fill="none" stroke="#a3d4d4" stroke-width="11"/>
<ellipse cx="1254.2" cy="286" rx="24.8" ry="25.8" fill="none" stroke="#b4e6e6" stroke-width="6"/>
<path d="M1252 257.6 C1268 255 1282 268 1282.5 285" stroke="#dcffff" stroke-width="2.4" fill="none" stroke-linecap="round" opacity="0.85"/>
<path d="M1159.5 229 C1151 243 1146.5 262 1147 282 C1147.5 303 1152 322 1158 333 C1165 345 1182 349.5 1197 349 C1214 348.5 1230 343 1237 333 C1246 319 1251.5 297 1251 274 C1250.5 256 1247 240 1242.5 231 C1236 250 1166 248 1159.5 229 Z" fill="url(#gb)"/>
<path d="M1159.5 229 C1151 243 1146.5 262 1147 282 C1147.5 303 1152 322 1158 333 C1165 345 1182 349.5 1197 349 C1214 348.5 1230 343 1237 333 C1246 319 1251.5 297 1251 274 C1250.5 256 1247 240 1242.5 231 C1236 250 1166 248 1159.5 229 Z" fill="url(#gv)"/>
<ellipse cx="1207" cy="256" rx="30" ry="18" fill="url(#gh)"/>
<ellipse cx="1201" cy="231.2" rx="41.5" ry="13.3" transform="rotate(1.4 1201 231.2)" fill="url(#gi)"/>
<path d="M1159.8 230.5 C1166 248.5 1236 250.5 1242.3 232.5" stroke="#c4f2f2" stroke-width="1.6" fill="none" opacity="0.9"/>
</g>
</svg></div>

<div id="vtools">
<div class="vb" style="left:0px;width:33px"><span id="swatch"></span></div>
<div class="vb" style="left:38px;width:34px"><svg width="32" height="31" viewBox="950 643 32 31"><path d="M962.2 646V661.3H977M962.2 661.3L953 669.7" fill="none" stroke="#555" stroke-width="1.4"/></svg></div>
<div class="vb" style="left:77px;width:34px;border-radius:4px 0 0 4px"><svg width="32" height="31" viewBox="989 643 32 31"><g fill="none" stroke="#666" stroke-width="1.3"><circle cx="1004.8" cy="658.7" r="12.3"/><path d="M998.6 658.7H1011M1004.8 652.5V664.9" stroke-width="1.5"/></g></svg></div>
<div class="vb" style="left:110px;width:33px;border-radius:0 4px 4px 0"><svg width="31" height="31" viewBox="1022.5 643 31 31"><g fill="none" stroke="#666" stroke-width="1.3"><circle cx="1038" cy="658.7" r="12.3"/><path d="M1031.8 658.7H1044.2" stroke-width="1.5"/></g></svg></div>
<div class="vb" style="left:148px;width:34px;border-radius:4px 0 0 4px"><svg width="32" height="31" viewBox="1060 643 32 31"><g fill="none" stroke="#666" stroke-width="1.3"><circle cx="1075.9" cy="658.7" r="9"/><path d="M1075.9 646V651M1075.9 666.4V671.4M1063.2 658.7H1068.2M1083.6 658.7H1088.6"/></g><circle cx="1075.9" cy="658.7" r="3" fill="#666"/></svg></div>
<div class="vb" style="left:181px;width:88px;border-radius:0 4px 4px 0"><span style="position:absolute;left:5px;top:0;line-height:31px;font-size:14px;color:#333">diagonal</span><svg width="10" height="6" viewBox="0 0 10 6" style="position:absolute;left:73px;top:13.5px"><path d="M1 1L5 5L9 1" fill="none" stroke="#333" stroke-width="1.4"/></svg></div>
<div class="vb" style="left:274px;width:34px"><svg width="32" height="31" viewBox="1186 643 32 31"><path d="M1192.2 650.5h3.2l1.6-2.2h8.2l1.6 2.2h3.2q1.4 0 1.4 1.4v14.3q0 1.4-1.4 1.4h-17.8q-1.4 0-1.4-1.4v-14.3q0-1.4 1.4-1.4z" fill="#fff" stroke="#000" stroke-width="1.5"/><ellipse cx="1201.1" cy="659.2" rx="4.6" ry="5.6" fill="#fff" stroke="#000" stroke-width="1.3"/><ellipse cx="1201.1" cy="659.2" rx="2.4" ry="3.2" fill="#000"/><rect x="1192.8" y="648.6" width="2.4" height="1.6" fill="#000"/></svg></div>
</div>
<div id="smooth"><span style="position:absolute;left:23px;top:4px;line-height:20px">Smooth:</span>
<span class="rd" style="left:95px"></span><span style="position:absolute;left:115px;top:6px;line-height:20px">Low</span>
<span class="rd on" style="left:157px"></span><span style="position:absolute;left:177px;top:6px;line-height:20px">Medium</span>
<span class="rd" style="left:248px"></span><span style="position:absolute;left:268px;top:6px;line-height:20px">High</span>
</div>
<div id="hl1"></div><div id="hl2"></div><div id="vl1"></div>
<div id="render">Render</div>
<div id="stl"><span>STL (Binary)</span><svg width="10" height="6" viewBox="0 0 10 6" style="position:absolute;left:106px;top:9px"><path d="M1 1L5 5L9 1" fill="none" stroke="#333" stroke-width="1.4"/></svg></div>
<div id="gen">Generate STL</div>

</body></html>
